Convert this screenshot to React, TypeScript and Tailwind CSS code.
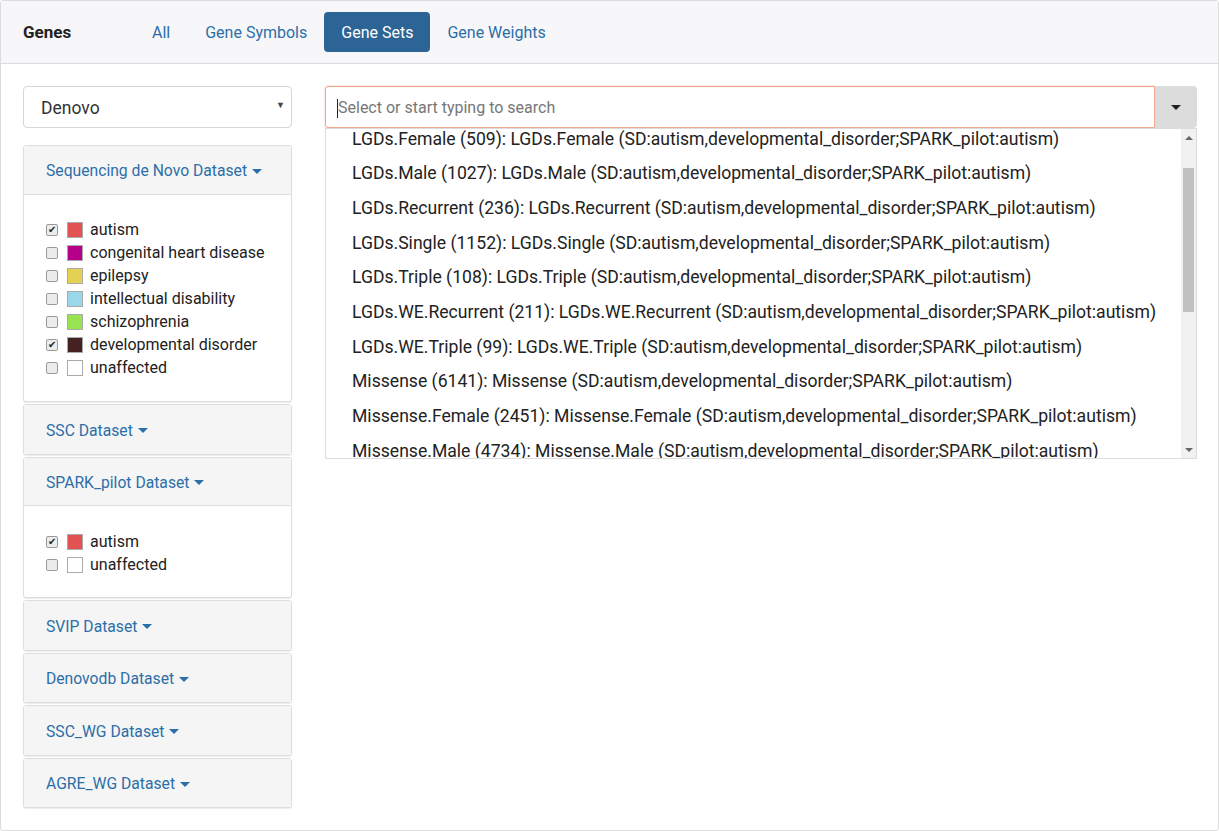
import React from 'react';

const items = [
  'LGDs.Female (509): LGDs.Female (SD:autism,developmental_disorder;SPARK_pilot:autism)',
  'LGDs.Male (1027): LGDs.Male (SD:autism,developmental_disorder;SPARK_pilot:autism)',
  'LGDs.Recurrent (236): LGDs.Recurrent (SD:autism,developmental_disorder;SPARK_pilot:autism)',
  'LGDs.Single (1152): LGDs.Single (SD:autism,developmental_disorder;SPARK_pilot:autism)',
  'LGDs.Triple (108): LGDs.Triple (SD:autism,developmental_disorder;SPARK_pilot:autism)',
  'LGDs.WE.Recurrent (211): LGDs.WE.Recurrent (SD:autism,developmental_disorder;SPARK_pilot:autism)',
  'LGDs.WE.Triple (99): LGDs.WE.Triple (SD:autism,developmental_disorder;SPARK_pilot:autism)',
  'Missense (6141): Missense (SD:autism,developmental_disorder;SPARK_pilot:autism)',
  'Missense.Female (2451): Missense.Female (SD:autism,developmental_disorder;SPARK_pilot:autism)',
  'Missense.Male (4734): Missense.Male (SD:autism,developmental_disorder;SPARK_pilot:autism)',
];

type Pheno = { name: string; color: string; checked: boolean };

const denovo: Pheno[] = [
  { name: 'autism', color: '#e35252', checked: true },
  { name: 'congenital heart disease', color: '#b7008a', checked: false },
  { name: 'epilepsy', color: '#e3d252', checked: false },
  { name: 'intellectual disability', color: '#99d8e8', checked: false },
  { name: 'schizophrenia', color: '#98e352', checked: false },
  { name: 'developmental disorder', color: '#442222', checked: true },
  { name: 'unaffected', color: '#ffffff', checked: false },
];

const spark: Pheno[] = [
  { name: 'autism', color: '#e35252', checked: true },
  { name: 'unaffected', color: '#ffffff', checked: false },
];

function Caret() {
  return <span className="inline-block ml-[5px] align-middle border-t-[5px] border-t-[#2c6ea8] border-x-[5px] border-x-transparent" />;
}

function Panel({ title, rows, pad }: { title: string; rows?: Pheno[]; pad?: string }) {
  return (
    <div className="border border-[#dedede] rounded-[3px] bg-white shadow-[0_1px_1px_rgba(0,0,0,0.08)]">
      <div className={`h-[48.5px] flex items-center px-[22px] pt-[3px] bg-[#f5f5f5] text-[15.7px] text-[#2c6ea8] ${rows ? 'border-b border-[#dedede]' : ''}`}>
        {title}
        <Caret />
      </div>
      {rows && (
        <div className={`px-[22px] flex flex-col ${pad}`}>
          {rows.map((r) => (
            <label key={r.name} className="flex items-center h-[23px] text-[16px] text-[#222]">
              <span className="w-[12px] h-[12px] rounded-[2px] border border-[#9a9a9a] bg-[#ececec] flex items-center justify-center text-[10px] leading-none text-[#222]">
                {r.checked ? '✔' : ''}
              </span>
              <span className="ml-[9px] w-[16px] h-[16px] border border-[#aaa]" style={{ backgroundColor: r.color }} />
              <span className="ml-[7px]">{r.name}</span>
            </label>
          ))}
        </div>
      )}
    </div>
  );
}

export default function App() {
  return (
    <div className="w-[1219px] h-[831px] bg-white" style={{ fontFamily: 'Roboto, "Liberation Sans", sans-serif' }}>
      <div className="h-[831px] border border-[#dcdcdc] rounded-[3px] flex flex-col">
        {/* header */}
        <div className="h-[63px] bg-[#f7f7f9] border-b border-[#dcdcdc] flex items-center pl-[22px]">
          <div className="text-[17px] font-bold text-[#222] w-[111px] pt-[2px]">Genes</div>
          <div className="flex items-center text-[16px] text-[#2c6ea8]">
            <div className="px-[18px] h-[40px] pt-[2px] flex items-center">All</div>
            <div className="px-[17px] h-[40px] pt-[2px] flex items-center">Gene Symbols</div>
            <div className="px-[17px] h-[40px] pt-[2px] flex items-center bg-[#2c6496] text-white rounded-[4px]">Gene Sets</div>
            <div className="px-[17px] h-[40px] pt-[2px] flex items-center">Gene Weights</div>
          </div>
        </div>

        {/* body */}
        <div className="flex pt-[22px] pl-[22px] pr-[21px]">
          <div className="w-[269px] flex flex-col">
            <div className="h-[42px] border border-[#d6d6d6] rounded-[4px] flex items-center justify-between pl-[17px] pr-[6px] pt-[3px] text-[17.5px] text-[#333] mb-[17px]">
              <span>Denovo</span>
              <span className="text-[9px] text-[#444] -mt-[6px]">▼</span>
            </div>
            <div className="flex flex-col gap-[2px]">
              <Panel title="Sequencing de Novo Dataset" rows={denovo} pad="pt-[23.5px] pb-[22px]" />
              <Panel title="SSC Dataset" />
              <Panel title="SPARK_pilot Dataset" rows={spark} pad="pt-[24px] pb-[21px]" />
              <Panel title="SVIP Dataset" />
              <Panel title="Denovodb Dataset" />
              <Panel title="SSC_WG Dataset" />
              <Panel title="AGRE_WG Dataset" />
            </div>
          </div>

          <div className="ml-[33px] flex-1 relative">
            <div className="flex h-[42px]">
              <div className="flex-1 border border-[#eba68c] rounded-l-[3px] shadow-[0_0_2px_rgba(235,140,110,0.5)] flex items-center pl-[11px] pt-[2px] text-[16px] text-[#777]">
                <span className="w-px h-[19px] bg-[#222]" />
                Select or start typing to search
              </div>
              <div className="w-[42px] bg-[#dcdcdc] rounded-r-[4px] flex items-center justify-center">
                <span className="border-t-[5px] border-t-[#222] border-x-[5px] border-x-transparent" />
              </div>
            </div>
            <div className="absolute left-0 right-0 top-[42px] h-[331px] border border-[#dcdcdc] bg-white flex overflow-hidden">
              <div className="flex-1 relative overflow-hidden">
                <div className="absolute left-[26px] top-[-7.5px] flex flex-col">
                  {items.map((t) => (
                    <div key={t} className="h-[34.7px] flex items-center text-[17.6px] text-[#222] whitespace-nowrap">
                      {t}
                    </div>
                  ))}
                </div>
              </div>
              <div className="w-[15px] bg-[#f1f1f1] flex flex-col items-center">
                <div className="h-[17px] flex items-center justify-center">
                  <span className="border-b-[4px] border-b-[#666] border-x-[4px] border-x-transparent" />
                </div>
                <div className="mt-[22px] w-[11px] h-[144px] bg-[#c1c1c1]" />
                <div className="flex-1" />
                <div className="h-[17px] flex items-center justify-center">
                  <span className="border-t-[4px] border-t-[#666] border-x-[4px] border-x-transparent" />
                </div>
              </div>
            </div>
          </div>
        </div>
      </div>
    </div>
  );
}
